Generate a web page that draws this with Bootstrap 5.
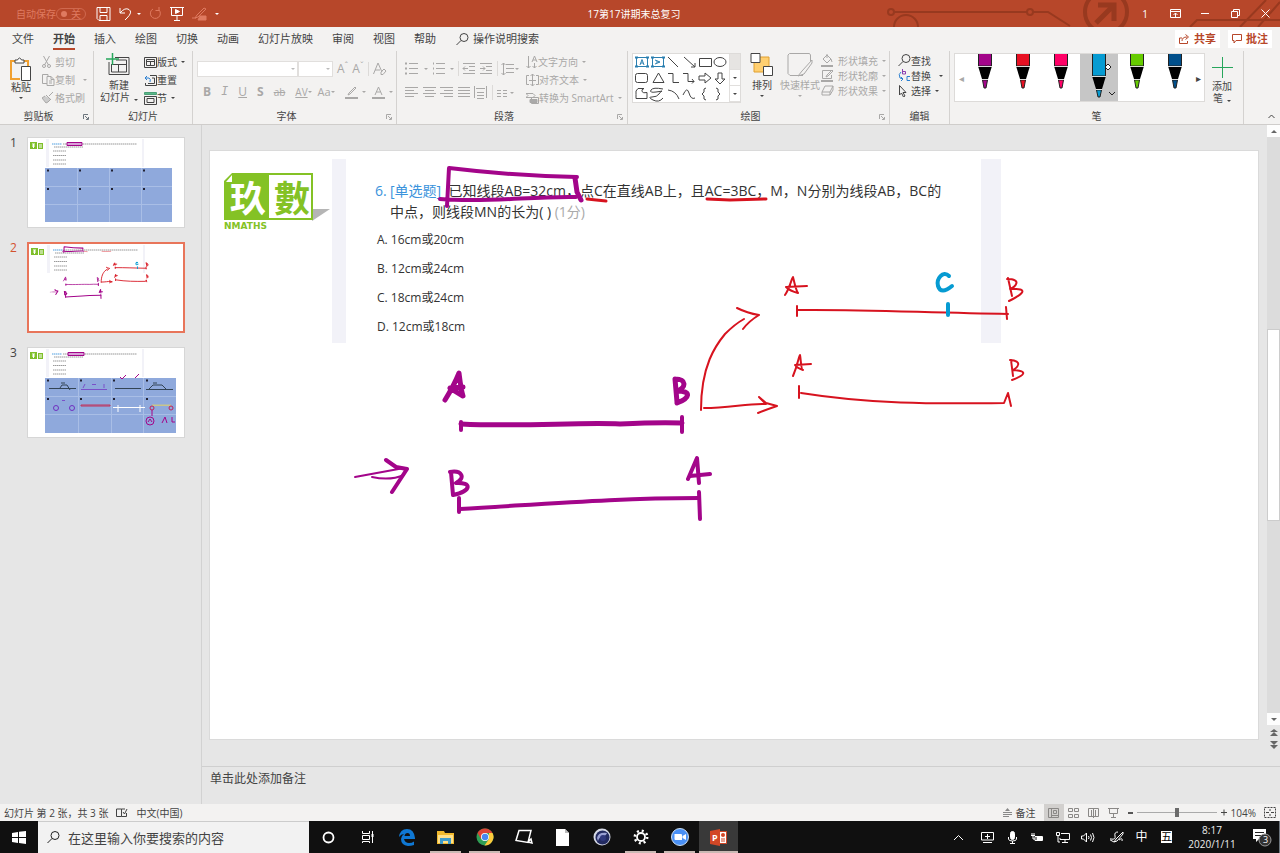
<!DOCTYPE html>
<html lang="zh-CN">
<head>
<meta charset="utf-8">
<meta name="viewport" content="width=device-width, initial-scale=1">
<title>17第17讲期末总复习</title>
<link href="https://cdn.jsdelivr.net/npm/bootstrap@5.3.0/dist/css/bootstrap.min.css" rel="stylesheet">
<style>
:root{--brand:#b7472a;--panel:#f3f2f1;--ink:#444;--off:#a9a8a7;--line:#d4d2d0}
body{font-family:"Open Sans","Noto Sans CJK SC",sans-serif;font-size:10px;line-height:12px;color:var(--ink);background:#e6e6e6}
button{background:none;border:0;padding:0;color:inherit;font:inherit;line-height:inherit}
svg{display:block;flex:none}
.ic{fill:none;stroke:currentColor;stroke-width:1}
.off{color:var(--off)}
.caret{display:inline-block;flex:none;border:2px solid transparent;border-top-color:currentColor;border-bottom:0;width:0;height:0}
.titlebar{background:var(--brand);color:#fff;height:27px}
.titlebar .faint{color:#df7a60}
.titlebar .me-toggle{margin-right:10px}
.pill{border:1px solid #d0694f;border-radius:8px;height:12px;width:30px}
.pill input{appearance:none;width:6px;height:6px;border-radius:50%;background:#df7a60;margin:0}
.decor{right:0;top:0}
.winbtn{width:30px}
.tabs{height:24px;background:var(--panel);font-size:11px}
.tablist{gap:19px;padding-left:12px}
.tabs a{color:var(--ink);text-decoration:none;line-height:19px;border-bottom:2px solid transparent;white-space:nowrap}
.tabs a.on{font-weight:700;border-color:var(--brand)}
.tabs input{border:0;background:none;color:var(--ink);font-size:11px;width:90px;padding:0}
input::placeholder,textarea::placeholder{color:var(--ink);opacity:1}
.action{background:#fff;color:var(--brand);font-weight:700;height:18px;font-size:11px}
.ribbon{background:var(--panel);height:74px;border-bottom:1px solid #cfcdcb}
.rgroup{border-right:1px solid var(--line);padding-top:2px;position:relative}
.rbody{height:54px}
.rlabel{text-align:center;line-height:18px}
.launch{position:absolute;right:4px;bottom:4px;color:var(--off)}
.rows button{height:18px;white-space:nowrap}
.rows.tight button{height:15px}
.big{line-height:12px;white-space:nowrap;width:34px}
.big.wide{width:42px}
.w94{width:94px}.w99{width:99px}.w204{width:204px}.w231{width:231px}.w262{width:262px}.w60{width:60px}.w294{width:294px}
.combo{appearance:none;border:1px solid #e1dfdd;border-radius:0;height:16px;padding:0;background:#fff url("data:image/svg+xml,%3Csvg xmlns='http://www.w3.org/2000/svg' width='4' height='2'%3E%3Cpath d='M0 0h4L2 2z' fill='%23bbb'/%3E%3C/svg%3E") no-repeat right 2px center}
.fmt{font-size:12px;line-height:14px}
.fmtrow{gap:10px;padding-left:10px}
.fmtrow .close-set{gap:6px}
.vr1{width:1px;height:14px;background:#dcdad8}
.gallery{background:#fff;border:1px solid #dddbd9}
.gscroll{width:12px}
.gscroll button{height:16px;border-left:1px solid #e1dfdd;border-bottom:1px solid #e1dfdd}
.pen{width:38px;height:47px}
.pen.on{background:#c6c6c6}
.arr{width:9px}
.thumbs{width:202px;border-right:1px solid #d2d2d2;padding:12px 16px 0 10px}
.thumb{height:91px;margin-bottom:14px}
.thumb .num{width:17px;font-size:12px;line-height:12px}
.thumb .frame{width:158px;border:1px solid #d6d6d6;background:#fff}
.thumb.on .num{color:#d35230}
.thumb.on .frame{border:2px solid #e8755a}
.inkr{stroke-width:var(--fine,2)}
.inkp{stroke-width:var(--bold,4)}
.mini{--fine:6;--bold:7}
.stage{padding:26px 9px 0 8px}
.slide{background:#fff;aspect-ratio:1048/588;outline:1px solid #dadada;position:relative;color:#333}
.slide .strip{background:#f2f2f8;width:14px;height:184px}
.strip2{width:20px;height:184px;background:#f2f2f8}
.logo{margin:22px 0 0 14px;overflow:visible}
.quest{width:602px;font-size:14px;line-height:21px;margin:29px 0 0 29px}
.quest .no{width:15px;color:#3a93dc}
.quest .tag{color:#3a93dc}
.quest .score{color:#aaa}
.opts{font-size:12px;line-height:29px;margin:3px 0 0 2px}
.overlay{position:absolute;inset:0;width:100%;height:100%}
.sbar{width:13px;height:600px;background:#dcdcdc}
.sbar button{height:12px;background:#fdfdfd;color:#666}
.sthumb{background:#fff;border:1px solid #ccc;height:192px;margin-top:192px}
.notes{height:38px;border-top:1px solid #cfcfcf}
.notes textarea{border:0;background:none;resize:none;font-size:12px;line-height:16px;padding:0;height:24px}
.status{background:var(--panel);height:17px}
.status .view{width:20px;height:17px;color:#8a8886}
.status .view.on{background:#d2d0ce}
.zoom{appearance:none;width:80px;height:10px;background:linear-gradient(#aaa,#aaa) center/100% 1px no-repeat}
.zoom::-webkit-slider-thumb{appearance:none;width:4px;height:9px;background:#6b6b6b;border-radius:0}
.taskbar{background:#101010;color:#fff;height:32px}
.taskbar .start{width:38px}
.taskbar .find{background:#f2f2f2;width:271px;color:#222;border-top:1px solid #ccc}
.taskbar .find input{border:0;background:none;font-size:13px;line-height:16px;padding:0}
.app{width:39px;height:32px;flex:none}
.app.run{background:linear-gradient(#c9b9b4,#c9b9b4) center bottom/31px 2px no-repeat}
.app.on{background:linear-gradient(#c9b9b4,#c9b9b4) center bottom/39px 2px no-repeat,#393939}
.tray{width:25px;height:32px}
.clock{width:66px;line-height:14px;font-size:10px;color:#eee}
.notice{width:34px}
</style>
</head>
<body class="d-flex flex-column min-vh-100">

<svg width="0" height="0" class="position-absolute" aria-hidden="true">
  <defs>
    <g id="inkmarks" fill="none" stroke-linecap="round" stroke-linejoin="round">
      <g stroke="#a3058a">
        <path class="inkp" d="M447 206L449 168C490 173 530 176 577 177M440 199C490 203 530 196 576 197"/>
        <path stroke-width="5" d="M575 178L577 192L581 200"/>
        <path stroke-width="5" d="M445 400C450 392 455 383 459 373C460 381 461 390 463 396L450 388L463 387M675 379L677 402M675 379C686 379 687 387 677 391C692 391 690 398 677 403"/>
        <path stroke-width="5" d="M461 424C520 427 580 422 620 424C640 423 660 422 682 423"/>
        <path class="inkp" d="M461 422V430M682 417V432M459 498V512M699 492L700 519M451 472L453 495M450 472C462 470 466 478 456 483C472 482 472 491 453 495M688 479L697 458L699 483M690 476L710 474"/>
        <path class="inkp" d="M460 509C560 503 620 498 699 498M386 460L396 467L407 469L392 492"/>
        <path stroke-width="2" d="M355 477L404 468M372 477Q390 481 404 475"/>
      </g>
      <g stroke="#d7131f">
        <path stroke-width="3" d="M587 199Q596 200 606 201M707 199L730 200L766 199"/>
        <path class="inkr" d="M701 410C701 365 716 345 725 334Q735 324 744 319M737 308Q747 313 759 315Q749 321 743 329M704 408C730 408 748 403 766 404L759 397L766 403L777 406Q768 409 758 413"/>
        <path class="inkr" d="M785 295C790 288 792 277 793 277C794 281 796 291 798 293Q790 291 786 287L807 286M1008 278L1012 296M1007 279C1023 279 1015 287 1010 289C1030 288 1023 294 1009 301"/>
        <path class="inkr" d="M797 310C860 309 930 313 1008 314M797 306V316M1006 307L1007 319"/>
        <path class="inkr" d="M793 376C798 364 799 355 800 355C801 360 801 370 803 370Q797 368 795 365L811 364M1011 360L1013 376M1010 360C1023 361 1018 367 1013 370C1030 371 1023 376 1012 380M799 386V398M801 393C870 404 930 404 1004 403L1008 393L1011 406"/>
      </g>
      <path stroke="#069bd2" class="inkp" d="M949 276C943 270 936 279 938 286Q941 295 952 286M948 304V315"/>
    </g>
    <g id="miniq">
      <path fill="#7fbf2a" d="M2 4h7v7H2zM10 5h5v6h-5z"/><path fill="none" stroke="#fff" d="M4 6h3M4 8h3M5.500 6v4M11 7h3M11 9h3"/>
      <path fill="#f2f2f8" d="M18 1h3v28h-3zM114 1h2v28h-2z"/>
      <g fill="none" stroke-dasharray="1.500 .5" stroke-width="1">
        <path stroke="#4f9fe0" d="M24 6h10"/><path stroke="#999" d="M35 6h74M26 9h29M25 13h13M25 17.500h13M25 22h13M25 26h13"/>
      </g>
    </g>
    <g id="lens" class="ic"><circle cx="8" cy="4.500" r="4"/><path d="M5 7.500L.5 12"/></g>
    <g id="pentip"><path fill="#000" d="M1 12h14l-4 13H5z"/><path stroke="#ddd" d="M1 12.500h14M5 25.500h6"/></g>
  </defs>
</svg>

<header class="titlebar d-flex align-items-center position-relative">
  <svg class="decor position-absolute" width="400" height="27" fill="none" stroke="#98391f" stroke-width="2"><circle cx="11" cy="12" r="3"/><path d="M14 12h133M153 12h15l22 14"/><circle cx="150" cy="12" r="3"/><path d="M14 27a12 12 0 0 1 24 0M310 27l7-7h83M360 27l26-27M378 27l22-25"/><circle cx="226" cy="12" r="21" stroke-width="4"/><path stroke-width="5" d="M216 23l17-17M218 5h16v16"/></svg>
  <div class="col d-flex align-items-center position-relative">
    <label for="auto" class="faint ms-3">自动保存</label>
    <span class="pill faint d-flex align-items-center justify-content-between px-1 me-toggle"><input type="checkbox" id="auto"><span>关</span></span>
    <button aria-label="保存"><svg class="ic" width="15" height="14"><path d="M1 .5h13v13H3l-2-2zM4 .5v5h7v-5M4 13.500v-5h7v5"/></svg></button>
    <button class="ms-2" aria-label="撤消"><svg class="ic" width="14" height="14" stroke-width="1.500"><path d="M1 1v5h5M1 6Q6 0 10 2.500T8 11l-2 2"/></svg></button><span class="caret ms-1"></span>
    <button class="faint ms-2" aria-label="重做"><svg class="ic" width="13" height="14" stroke-width="1.500"><path d="M4 2a5 5 0 1 0 6 1M10 0v3.500H6.500"/></svg></button>
    <button class="ms-2" aria-label="放映"><svg class="ic" width="14" height="14"><path d="M0 .5h14M1.500 1v7.500h11V1M7 9v4M4 13.500h6"/><path fill="currentColor" d="M5.500 2.500l4 2-4 2z"/></svg></button>
    <button class="faint ms-2" aria-label="墨迹"><svg class="ic" width="15" height="14"><path d="M12 1L5 8l-2 3 3-1 8-8zM0 11h4"/><path fill="currentColor" d="M8 9h6v4H6z"/></svg></button><span class="caret ms-2"></span>
  </div>
  <div class="position-relative pe-2 me-1">17第17讲期末总复习</div>
  <div class="col d-flex align-items-center justify-content-end position-relative">
    <span class="me-2 pe-1">1</span>
    <button class="winbtn d-flex justify-content-center" aria-label="功能区选项"><svg class="ic" width="11" height="9"><path d="M.5.500h10v8H.5zM0 2.500h11M5.500 8V4M3.500 6l2-2 2 2"/></svg></button>
    <button class="winbtn d-flex justify-content-center" aria-label="最小化"><svg class="ic" width="8" height="9"><path d="M0 4.500h8"/></svg></button>
    <button class="winbtn d-flex justify-content-center" aria-label="还原"><svg class="ic" width="9" height="9"><path d="M.5 2.500h6v6h-6zM2.500 2V.5h6v6H7"/></svg></button>
    <button class="winbtn d-flex justify-content-center" aria-label="关闭"><svg class="ic" width="9" height="9"><path d="M.5.500l8 8M8.500.500l-8 8"/></svg></button>
  </div>
</header>

<nav class="tabs d-flex align-items-center">
  <div class="tablist d-flex">
    <a href="#">文件</a><a href="#" class="on">开始</a><a href="#">插入</a><a href="#">绘图</a><a href="#">切换</a><a href="#">动画</a><a href="#">幻灯片放映</a><a href="#">审阅</a><a href="#">视图</a><a href="#">帮助</a>
  </div>
  <label for="tell" class="ms-3 ps-1 me-1"><svg width="13" height="13"><use href="#lens"/></svg></label>
  <input id="tell" placeholder="操作说明搜索">
  <div class="ms-auto d-flex gap-2 pe-2">
    <button class="action px-1 d-flex align-items-center gap-1"><svg class="ic" width="11" height="10"><path d="M3 4H.500v5.500h8V7M3 7q0-4 5-4M6.500.500l3 2.500-3 2.500"/></svg>共享</button>
    <button class="action px-1 d-flex align-items-center gap-1"><svg class="ic" width="10" height="10"><path d="M.5.500h9v6H4L2 9V6.500H.5z"/></svg>批注</button>
  </div>
</nav>

<section class="ribbon d-flex">
  <div class="rgroup w94">
    <div class="rbody d-flex">
      <button class="big wide d-flex flex-column align-items-center pt-1"><svg class="ic" width="24" height="24"><path stroke="#f0a030" stroke-width="2" d="M7 4H2v18h9M15 4h4v5"/><path d="M6 6V3h2.500q2-4 4 0H15v3z" fill="#fff"/><path d="M12.500 9.500h9v14h-9z" fill="#fff"/></svg>粘贴<span class="caret mt-1"></span></button>
      <div class="rows off d-flex flex-column align-items-start">
        <button class="d-flex align-items-center gap-1"><svg class="ic" width="9" height="12"><path d="M1.500 0l5 9M7.500 0l-5 9"/><circle cx="2" cy="10" r="1.500"/><circle cx="7" cy="10" r="1.500"/></svg>剪切</button>
        <button class="d-flex align-items-center"><svg class="ic" width="13" height="12"><path d="M5 9.500H.5v-9H6v2M5 2.500h4l3 3v6H5zM9 2.500v3h3M7 7h3M7 9h3"/></svg>复制<span class="caret ms-2"></span></button>
        <button class="d-flex align-items-center"><svg class="ic" width="13" height="12"><path d="M11 0l-4 4M4 3l5 5M3 4L0 6l4 5 2-1 3-3" fill="#ccc"/></svg>格式刷</button>
      </div>
    </div>
    <div class="rlabel pe-3">剪贴板</div><svg class="ic launch text-secondary" width="6" height="6"><path d="M.5 5V.500H5M2 2l3 3M5.500 3v2.500H3"/></svg>
  </div>

  <div class="rgroup w99">
    <div class="rbody d-flex">
      <button class="big wide d-flex flex-column align-items-center ms-1"><svg class="ic" width="26" height="26"><path d="M9 4.500h14v17H3V9M5.500 11v8h15V7H10M5 11.500h16M12.500 12v7"/><path stroke="#26a65b" stroke-width="1.500" d="M6.500 0v12M0 6h13"/></svg>新建<span>幻灯片<span class="caret ms-1"></span></span></button>
      <div class="rows d-flex flex-column align-items-start ps-1">
        <button class="d-flex align-items-center"><svg class="ic" width="13" height="11"><path d="M.5.500h12v10H.5zM2.500 2.500h8v6h-8zM3 4.500h7M6.500 5v4"/></svg>版式<span class="caret ms-1"></span></button>
        <button class="d-flex align-items-center"><svg class="ic" width="13" height="11"><path d="M6 .5h6.500v10h-11V8M8 3h2.500v5.500H4"/><path stroke="#2a7fd0" d="M3 1L1 3l2 2M1 3h4q2 1 1 4"/></svg>重置</button>
        <button class="d-flex align-items-center"><svg class="ic" width="13" height="13"><path fill="#5cb98a" stroke="#4c9f76" d="M.5.500h12v2H.5z"/><path d="M.5 4.500h12v8H.5zM3 6.500h7v4H3z"/></svg>节<span class="caret ms-1"></span></button>
      </div>
    </div>
    <div class="rlabel">幻灯片</div>
  </div>

  <div class="rgroup w204">
    <div class="rbody off d-flex flex-column justify-content-center">
      <div class="d-flex align-items-center ps-1 mb-2">
        <select class="combo" style="width:101px" aria-label="字体"></select><select class="combo" style="width:35px" aria-label="字号"></select>
        <button class="ms-1 fmt">A<sup>ˆ</sup></button><button class="ms-1 fmt">A<sup>ˇ</sup></button><span class="vr1 mx-1"></span>
        <button aria-label="清除格式"><svg class="ic" width="14" height="14"><path d="M.5 12L5 1l4 9M2 8h5M8 10l3-3 2 2-3 3.500H8z"/></svg></button>
      </div>
      <div class="fmt fmtrow d-flex align-items-center">
        <button><b>B</b></button><button class="fst-italic font-monospace">I</button><button class="text-decoration-underline">U</button><button><b>S</b></button><button style="font-size:10px"><s>ab</s></button>
        <span class="close-set d-flex align-items-center">
        <button class="d-flex align-items-center" aria-label="字符间距"><span class="text-decoration-underline" style="font-size:10px">AV</span><span class="caret"></span></button><button class="d-flex align-items-center" style="font-size:11px">Aa<span class="caret"></span></button>
        <button class="d-flex align-items-center gap-1 ms-1" aria-label="突出显示"><svg class="ic" width="13" height="13"><path d="M10 1L4 7l-1 2 2-1 6-6z"/><path stroke-width="2" d="M0 12h13"/></svg><span class="caret"></span></button>
        <button class="d-flex align-items-center gap-1" aria-label="字体颜色"><svg class="ic" width="13" height="13"><path d="M3 9l3.500-8L10 9M4.500 6h4"/><path stroke-width="2" d="M0 12h13"/></svg><span class="caret"></span></button>
        </span>
      </div>
    </div>
    <div class="rlabel pe-3">字体</div><svg class="ic launch" width="6" height="6"><path d="M.5 5V.500H5M2 2l3 3M5.500 3v2.500H3"/></svg>
  </div>

  <div class="rgroup w231">
    <div class="rbody off d-flex justify-content-start">
      <svg class="ic ms-2" width="121" height="54"><path d="M4 10.500h9M4 15.500h9M4 20.500h9M31 10.500h9M31 15.500h9M31 20.500h9M58 10.500h12M64 13.500h6M64 17.500h6M58 20.500h12M58 15.500h5M60 13.500l-2 2 2 2M75 10.500h12M81 13.500h6M81 17.500h6M75 20.500h12M75 15.500h5M78 13.500l2 2-2 2M101 11.500h8M101 15.500h8M101 19.500h8M98.500 10v12M96.500 12l2-2 2 2M96.500 20l2 2 2-2"/><path d="M0 34.500h13M0 37.500h9M0 40.500h13M0 43.500h9M18 34.500h13M20 37.500h9M18 40.500h13M20 43.500h9M35 34.500h13M39 37.500h9M35 40.500h13M39 43.500h9M53 34.500h12M53 37.500h12M53 40.500h12M53 43.500h12M69.500 33v12M81.500 33v12M72 39.500h7M72 42.500h7M72 45.500h7M71 35.500h9M92 37.500h4M92 40.500h4M92 43.500h4M98 37.500h4M98 40.500h4M98 43.500h4"/><path stroke-width="2" d="M0 10.500h2M0 15.500h2M0 20.500h2M28 10.500h1M28 15.500h1M28 20.500h1"/><path stroke="#dcdad8" d="M53.500 8v15M92.500 8v15M87.500 32v15"/><path fill="currentColor" stroke="none" d="M19 15h4l-2 2zM45 15h4l-2 2zM110 15h4l-2 2zM105 39h4l-2 2z"/></svg>
      <div class="rows d-flex flex-column align-items-start">
        <button class="d-flex align-items-center"><svg class="ic" width="12" height="13"><path d="M2.500 0v12M.5 10l2 2 2-2M8.500 7v5M6.500 10l2 2 2-2M6 6l2.500-6L11 6M7 4h3"/></svg>文字方向<span class="caret ms-1"></span></button>
        <button class="d-flex align-items-center"><svg class="ic" width="13" height="13"><path d="M3 1.500H.500v9H3M10 1.500h2.500v9H10M6.500 0v12M4.500 2l2-2 2 2M4.500 10l2 2 2-2M3 6.500h7"/></svg>对齐文本<span class="caret ms-1"></span></button>
        <button class="d-flex align-items-center"><svg class="ic" width="13" height="11"><path d="M0 .5h7l2 2-2 2H0l2-2zM5.500 4.500h7v6h-7z"/><path d="M4 6.500h7v3H4z" fill="#aaa"/></svg>转换为 SmartArt<span class="caret ms-1"></span></button>
      </div>
    </div>
    <div class="rlabel pe-3">段落</div><svg class="ic launch" width="6" height="6"><path d="M.5 5V.500H5M2 2l3 3M5.500 3v2.500H3"/></svg>
  </div>

  <div class="rgroup w262">
    <div class="rbody d-flex ps-1">
      <div class="gallery d-flex" style="height:50px;width:109px">
        <svg class="ic" width="96" height="48"><g stroke="#2a7fb0"><path d="M3.500 3.500h11v9h-11zM19.500 3.500h11v9h-11z"/><path d="M7 11l2-5.500 2 5.500M8 9h2M22 6l5 2-5 2M24 7v2"/><path stroke-width="2" d="M2 3.500h3M13 3.500h3M2 12.500h3M13 12.500h3M18 3.500h3M29 3.500h3M18 12.500h3M29 12.500h3"/></g><path d="M35 3l10 10M51 3l11 10M62 9v4h-4M66.500 4.500h12v8h-12zM93 8a6 4.500 0 1 1-12 0a6 4.500 0 1 1 12 0M20 28.500h11L25.500 19zM35 19.500h5v9h6M50 19.500h5v8h6M59 25l2 2.500-2 2M66 22h6v-3l6 5-6 5v-3h-6zM85 19h4v6h3l-5 5-5-5h3zM8 34.500H5q-3 2-2 6v4h11v-6q-4 1-5-1t2-3zM30 35q-10-2-12 1t5 2 6-1-3 3-7 3 1 3 10-2M35 36q8 1 11 9M50 41q4-9 6-2t6 5M73 34q-3 0-2 4l-2 2 2 2q-1 4 2 4M83 34q3 0 2 4l2 2-2 2q1 4-2 4"/><rect x="2.500" y="19.500" width="12" height="9" rx="2"/></svg>
        <div class="gscroll d-flex flex-column"><button class="off" style="background:#e6e4e2" aria-label="上"></button><button class="d-flex align-items-center justify-content-center" aria-label="下"><span class="caret"></span></button><button class="d-flex align-items-center justify-content-center" aria-label="更多"><span class="caret"></span></button></div>
      </div>
      <button class="big d-flex flex-column align-items-center ms-1"><svg class="ic" width="24" height="26"><path fill="#ffcf70" stroke="#e0a030" d="M4 4h15v15H4z"/><path fill="#fff" d="M1 .5h9v9H1zM13.500 13.500h9v9h-9z"/></svg>排列<span class="caret mt-1"></span></button>
      <button class="big wide off d-flex flex-column align-items-center"><svg class="ic" width="26" height="26"><path d="M16 22.500H3l-2-2V2L2.500.500h20l1 1.500v6M25 7L15 18l-4 5 6-2 8-11z"/></svg>快速样式<span class="caret mt-1"></span></button>
      <div class="rows tight off d-flex flex-column align-items-start">
        <button class="d-flex align-items-center"><svg class="ic me-1" width="13" height="13"><path d="M6 1L2 5l4 4 4-4zM6 0v4M10 5l1 3"/><path stroke-width="2" d="M0 12h12"/></svg>形状填充<span class="caret ms-1"></span></button>
        <button class="d-flex align-items-center"><svg class="ic me-1" width="13" height="13"><path d="M10 1.500H1.500v8h9V6M11 1L6 6l-1 2 2-1 5-5z"/><path stroke-width="2" d="M0 12h12"/></svg>形状轮廓<span class="caret ms-1"></span></button>
        <button class="d-flex align-items-center"><svg class="ic me-1" width="13" height="11"><path d="M4 1h8L9 7H1zM1 7v3h8l3-5V1M9 7v3"/></svg>形状效果<span class="caret ms-1"></span></button>
      </div>
    </div>
    <div class="rlabel pe-3">绘图</div><svg class="ic launch" width="6" height="6"><path d="M.5 5V.500H5M2 2l3 3M5.500 3v2.500H3"/></svg>
  </div>

  <div class="rgroup w60">
    <div class="rbody rows tight d-flex flex-column align-items-start ps-2">
      <button class="d-flex align-items-center"><svg width="13" height="13"><use href="#lens"/></svg>查找</button>
      <button class="d-flex align-items-center"><svg class="ic" width="13" height="13"><path stroke="#8a3fb0" d="M4.500 0v5h3V2.500h-3"/><path stroke="#2a7fd0" d="M3 3q-3 2-1 6l3 1M3 8l2 2-2 2M12 7.500H9v4h3"/></svg>替换<span class="caret ms-2"></span></button>
      <button class="d-flex align-items-center"><svg class="ic me-1" width="9" height="12"><path d="M1.500.500v9.500l2-2 2 4 1.500-1-2-3.500h3z"/></svg>选择<span class="caret ms-1"></span></button>
    </div>
    <div class="rlabel">编辑</div>
  </div>

  <div class="rgroup w294">
    <div class="rbody d-flex ps-1">
      <div class="gallery d-flex align-items-start justify-content-center" style="height:49px;width:251px">
        <button class="arr align-self-center off" aria-label="前">◂</button>
        <button class="pen d-flex justify-content-center" aria-label="紫色笔"><svg width="16" height="36"><path fill="#a3058a" stroke="#222" d="M1.500-1h13v13h-13zM5.500 26h5L9 34H7z"/><use href="#pentip"/></svg></button>
        <button class="pen d-flex justify-content-center" aria-label="红色笔"><svg width="16" height="36"><path fill="#e81123" stroke="#222" d="M1.500-1h13v13h-13zM5.500 26h5L9 34H7z"/><use href="#pentip"/></svg></button>
        <button class="pen d-flex justify-content-center" aria-label="粉色笔"><svg width="16" height="36"><path fill="#ff0066" stroke="#222" d="M1.500-1h13v13h-13zM5.500 26h5L9 34H7z"/><use href="#pentip"/></svg></button>
        <button class="pen on d-flex justify-content-center" aria-label="蓝色笔"><svg width="36" height="47"><path fill="#069bd2" stroke="#222" d="M11.500-1h13v23h-13zM15.500 36h5L19 43h-2z"/><use href="#pentip" x="10" y="10"/><path fill="none" stroke="#222" d="M28 38l3 3 3-3"/><path fill="#fff" stroke="#222" d="M27 10l-3 3 3 3 3-3z"/></svg></button>
        <button class="pen d-flex justify-content-center" aria-label="绿色笔"><svg width="16" height="36"><path fill="#66cc00" stroke="#222" d="M1.500-1h13v13h-13zM5.500 26h5L9 34H7z"/><use href="#pentip"/></svg></button>
        <button class="pen d-flex justify-content-center" aria-label="深蓝笔"><svg width="16" height="36"><path fill="#004f8b" stroke="#222" d="M1.500-1h13v13h-13zM5.500 26h5L9 34H7z"/><use href="#pentip"/></svg></button>
        <button class="arr align-self-center" aria-label="后">▸</button>
      </div>
      <button class="big d-flex flex-column align-items-center pt-1"><svg width="22" height="23"><path stroke="#26a65b" d="M11.500 0v21M1 10.500h21"/></svg>添加<span>笔<span class="caret ms-1"></span></span></button>
    </div>
    <div class="rlabel">笔</div>
  </div>
  <button class="ms-auto mt-auto me-1 mb-1" aria-label="折叠功能区"><svg class="ic" width="9" height="7"><path d="M1.500 5l3-3 3 3"/></svg></button>
</section>

<main class="d-flex flex-grow-1">
  <aside class="thumbs flex-shrink-0">
    <div class="thumb d-flex"><div class="num">1</div><div class="frame"><svg width="156" height="88"><use href="#miniq"/><path fill="#8fa9dc" d="M17 30h127v54H17z"/><path stroke="#a9bee6" d="M17 48.500h127M17 66.500h127M49.500 30v54M81.500 30v54M113.500 30v54"/><path stroke="#223" stroke-width="2" stroke-dasharray="2 30" d="M19 32.500h110M19 51h110"/><path fill="#d9a0d8" stroke="#a3058a" d="M39 4.500h15v3H39z"/></svg></div></div>
    <div class="thumb on d-flex"><div class="num">2</div><div class="frame"><svg width="154" height="87"><use href="#miniq"/><svg class="mini" viewBox="210 151 1048 588" width="154" height="87"><use href="#inkmarks"/></svg></svg></div></div>
    <div class="thumb d-flex"><div class="num">3</div><div class="frame"><svg width="156" height="88" fill="none"><use href="#miniq"/><path fill="#8fa9dc" d="M17 30h131v55H17z"/><path stroke="#a9bee6" d="M17 48.500h131M17 66.500h131M50.500 30v55M83.500 30v55M115.500 30v55"/><path stroke="#223" stroke-width="2" stroke-dasharray="2 31" d="M19 32.500h110M19 51h110"/><path fill="#d9a0d8" stroke="#a3058a" d="M40 4.500h16v3H40z"/><path stroke="#345" d="M21 40.500h27M32 40l2-3h5l3 5M33 35h4M87 40.500h26M118 41.500h27M121 41l4-4h9l4 4M125 35h4"/><path stroke="#7a50c8" d="M53 41.500h26M55 40l2-4M76 36v4M64 36.500h4M34 52.500h3"/><path stroke="#c0305a" d="M53 57h29v1H53z"/><path stroke="#fff" d="M85 59.500h32M90 57v7M112 57v7"/><path stroke="#c9c58a" d="M124 57h19v.5h-19z"/><path stroke="#a3058a" d="M92 29l2 2 4-4M107 30l4-4M134 75l3-6 2 6M144 69v5h3"/><circle cx="28" cy="60" r="2.500" stroke="#7030c0"/><circle cx="44" cy="60" r="2.500" stroke="#7030c0"/><circle cx="124" cy="60" r="2" stroke="#c0205a"/><circle cx="143" cy="60" r="2" stroke="#c0205a"/><circle cx="122" cy="73" r="4" stroke="#a3058a"/><path stroke="#a3058a" d="M120 74l2-3 2 3M124 62v6"/></svg></div></div>
  </aside>

  <section class="d-flex flex-column flex-grow-1">
    <div class="d-flex flex-grow-1">
      <div class="stage flex-grow-1">
        <div class="slide d-flex align-items-start">
          <svg class="logo" width="108" height="58"><path fill="#b5b5b5" d="M88 36h18L88 48z"/><path fill="#84c225" d="M8 0h81v47H0V8z"/><path fill="#fff" d="M45 2h42v43H45zM8 2v7H2z"/><g font-family="Noto Sans CJK TC,sans-serif" font-weight="700" font-size="36"><text x="6" y="39" fill="#fff">玖</text><text x="50" y="39" fill="#84c225">數</text></g><text x="0" y="56" font-family="DejaVu Sans,sans-serif" font-weight="700" font-size="9" fill="#84c225">NMATHS</text></svg>
          <div class="strip mt-2"></div>
          <div class="quest">
            <div class="d-flex"><span class="no">6.</span><div><span class="tag">[单选题]</span>&nbsp; 已知线段AB=32cm，点C在直线AB上，且AC=3BC，M，N分别为线段AB，BC的<br>中点，则线段MN的长为( ) <span class="score">(1分)</span></div></div>
            <div class="opts"><div>A. 16cm或20cm</div><div>B. 12cm或24cm</div><div>C. 18cm或24cm</div><div>D. 12cm或18cm</div></div>
          </div>
          <div class="strip2 mt-2 ms-1"></div>
          <svg class="overlay" viewBox="210 151 1048 588"><use href="#inkmarks"/></svg>
        </div>
      </div>
      <div class="d-flex flex-column flex-shrink-0">
        <div class="sbar d-flex flex-column">
          <button class="d-flex align-items-center justify-content-center" aria-label="向上滚动"><svg width="6" height="3"><path fill="currentColor" d="M0 3h6L3 0z"/></svg></button>
          <div class="sthumb"></div>
          <button class="mt-auto d-flex align-items-center justify-content-center" aria-label="向下滚动"><svg width="6" height="3"><path fill="currentColor" d="M0 0h6L3 3z"/></svg></button>
        </div>
        <svg class="mx-auto mt-1" width="8" height="22" fill="#666"><path d="M0 3h8L4 0zM0 7h8L4 3zM0 12h8l-4 4zM0 16h8l-4 4z"/></svg>
      </div>
    </div>
    <div class="notes d-flex align-items-start ps-2 pt-1"><textarea class="flex-grow-1" aria-label="备注" placeholder="单击此处添加备注"></textarea></div>
  </section>
</main>

<footer class="status d-flex align-items-center">
  <span class="px-1">幻灯片 第 2 张，共 3 张</span>
  <svg class="ic ms-1" width="12" height="9"><path d="M5.500 1v7.500H.500V1zM5.500 1H9M5.500 8.500h5V5M7 4l1.500 2L11 1"/></svg>
  <span class="ms-1 ps-1">中文(中国)</span>
  <div class="ms-auto d-flex align-items-center">
    <button class="d-flex align-items-center gap-1 me-2"><svg width="9" height="9" fill="#888"><path d="M2 3h5L4.500 0zM0 4h9v1H0zM0 6h9v1H0zM0 8h6v1H0z"/></svg>备注</button>
    <button class="view on d-flex align-items-center justify-content-center" aria-label="普通"><svg class="ic" width="11" height="10"><path d="M.5.500h10v9H.500zM3.500.500v9M5.500 2.500h3v3h-3zM4 7.500h6"/></svg></button>
    <button class="view d-flex align-items-center justify-content-center" aria-label="浏览"><svg class="ic" width="11" height="10"><path d="M.5.500h4v3h-4zM6.500.500h4v3h-4zM.500 6.500h4v3h-4zM6.500 6.500h4v3h-4z"/></svg></button>
    <button class="view d-flex align-items-center justify-content-center" aria-label="阅读"><svg class="ic" width="11" height="10"><path d="M.5.500h10v8H.500zM5.500 0v10M3.500 2v6M7.500 2v6"/></svg></button>
    <button class="view d-flex align-items-center justify-content-center" aria-label="放映"><svg class="ic" width="11" height="10"><path d="M0 .500h11M1.500 1v4.500h8V1M5.500 6v3M3 9.500h5"/></svg></button>
    <button class="ms-1 me-1" aria-label="缩小"><svg width="5" height="2" fill="#555"><path d="M0 0h5v2H0z"/></svg></button>
    <input type="range" class="zoom" min="0" max="100" value="50" aria-label="缩放">
    <button class="mx-1" aria-label="放大"><svg class="ic" width="6" height="7"><path d="M3 .500v6M0 3.500h6"/></svg></button>
    <span>104%</span>
    <button class="ms-2 me-1" aria-label="适应窗口"><svg class="ic" width="12" height="11"><path stroke-dasharray="2 1" d="M.5.500h11v10H.5z"/><path d="M6 2v2M6 7v2M2 5.500h3M7 5.500h3"/></svg></button>
  </div>
</footer>

<footer class="taskbar d-flex align-items-stretch">
  <button class="start d-flex align-items-center justify-content-center" aria-label="开始"><svg width="14" height="13" fill="#fff"><path d="M0 2l6-1v5H0zM7 .800L14 0v6H7zM0 7h6v5l-6-1zM7 7h7v6l-7-1z"/></svg></button>
  <div class="find d-flex align-items-center"><label for="seek" class="ms-2 me-2"><svg width="14" height="13"><use href="#lens" x="1"/></svg></label><input id="seek" class="flex-grow-1" placeholder="在这里输入你要搜索的内容"></div>
  <div class="d-flex">
    <button class="app d-flex align-items-center justify-content-center" aria-label="Cortana"><svg width="13" height="13"><circle cx="6.500" cy="6.500" r="5" fill="none" stroke="#fff" stroke-width="1.800"/></svg></button>
    <button class="app d-flex align-items-center justify-content-center" aria-label="任务视图"><svg class="ic" width="14" height="12"><path d="M1.500 0v2.500h7V0M1.500 4.500h7v4h-7zM1.500 12v-1.500h7V12M11.500 0v12"/><path stroke-width="2" d="M11.500 3v3"/></svg></button>
    <button class="app d-flex align-items-center justify-content-center" aria-label="Edge"><svg width="16" height="17"><path fill="#0f78d4" d="M0 8Q1 0 8 0t8 9v1H5q1 4 5 4 3 0 5-1.500V16q-3 1-6 1-7-1-7-7 0-3 3-5-3 0-5 3M5.500 7H11q0-3-2.500-3T5.500 7"/></svg></button>
    <button class="app run d-flex align-items-center justify-content-center" aria-label="文件资源管理器"><svg width="18" height="15"><path fill="#f0b92e" d="M0 1h7l1 2h9v11H0z"/><path fill="#ffe08a" d="M1 5h15v8H1z"/><path fill="#3e9ccc" d="M3 8h11v6h-3v-3H6v3H3z"/></svg></button>
    <button class="app run d-flex align-items-center justify-content-center" aria-label="Chrome"><svg width="18" height="18"><circle cx="9" cy="9" r="8.500" fill="#2f9e55"/><path fill="#dc4437" d="M1.500 5A8.500 8.500 0 0 1 16.500 5H9L5 11z"/><path fill="#fdca3c" d="M16.500 5A8.500 8.500 0 0 1 8.500 17.500L13 11V5z"/><circle cx="9" cy="9" r="4" fill="#fff"/><circle cx="9" cy="9" r="3.200" fill="#4687f0"/></svg></button>
    <button class="app d-flex align-items-center justify-content-center" aria-label="画板"><svg width="19" height="16" fill="none" stroke="#fff" stroke-width="1.500"><path d="M5 1.500h12l-3 12-12-2zM14 13l3-3 1 4z"/></svg></button>
    <button class="app d-flex align-items-center justify-content-center" aria-label="文档"><svg width="13" height="17"><path fill="#fff" d="M0 0h9l4 4v13H0z"/><path fill="#bbb" d="M9 0v4h4z"/></svg></button>
    <button class="app d-flex align-items-center justify-content-center" aria-label="Cinema 4D"><svg width="18" height="18"><circle cx="9" cy="9" r="8.500" fill="#d5d9e6"/><circle cx="9.500" cy="9.500" r="7" fill="#222a60"/><path fill="#9aa1d4" d="M4 10q1-6 10-5-1 3-4 3-4 1-5 5z"/><circle cx="10" cy="10" r="3" fill="#30387c"/></svg></button>
    <button class="app run d-flex align-items-center justify-content-center" aria-label="设置"><svg width="16" height="16" fill="none" stroke="#fff"><circle cx="8" cy="8" r="4" stroke-width="1.800"/><circle cx="8" cy="8" r="6.200" stroke-width="2.500" stroke-dasharray="2 2.870"/></svg></button>
    <button class="app run d-flex align-items-center justify-content-center" aria-label="Zoom"><svg width="18" height="18"><circle cx="9" cy="9" r="8.500" fill="#4a90f5" stroke="#cde"/><path fill="#fff" d="M3.500 6H10q1 0 1 1v5H4.500q-1 0-1-1zM11.500 8L15 6v6l-3.500-2z"/></svg></button>
    <button class="app on d-flex align-items-center justify-content-center" aria-label="PowerPoint"><svg width="18" height="17"><path fill="#fff" stroke="#d24726" d="M8 2.500h8.500v12H8z"/><path fill="#d24726" d="M0 2l10-2v17L0 15zM11 9.500h4v1h-4zM11 11.500h4v1h-4z"/><circle cx="13" cy="6" r="2" fill="#d24726"/><text x="2" y="12" font-size="9" font-weight="700" fill="#fff">P</text></svg></button>
  </div>
  <div class="d-flex align-items-center ms-auto">
    <button class="tray d-flex align-items-center justify-content-center me-1" aria-label="更多图标"><svg class="ic" width="11" height="7"><path d="M1 6l4.500-4.500L10 6"/></svg></button>
    <button class="tray d-flex align-items-center justify-content-center" aria-label="显示"><svg class="ic" width="13" height="11"><path d="M.5.500h12v7.500H.500zM2 10.500h9M6.500 2v5M4 4.500h5"/></svg></button>
    <button class="tray d-flex align-items-center justify-content-center" aria-label="麦克风"><svg class="ic" width="9" height="13"><rect x="2.500" y=".5" width="4" height="8" rx="2" fill="#fff"/><path d="M.5 6v2q0 2 4 2t4-2V6M4.500 10v2.500M2 12.500h5"/></svg></button>
    <button class="tray d-flex align-items-center justify-content-center" aria-label="电池"><svg class="ic" width="13" height="9"><path d="M4 3.500h7.500v4H4zM1 0v2M3 0v2M0 2.500h4M2 3v3h2"/><path fill="#fff" d="M6 4h5v3H6z"/></svg></button>
    <button class="tray d-flex align-items-center justify-content-center" aria-label="网络"><svg class="ic" width="14" height="11"><path d="M5 1.500h8.500v6H4V6M9 8v2M6 10.500h6M.5.500h3v3h-3zM2 4v6h2"/></svg></button>
    <button class="tray d-flex align-items-center justify-content-center me-1" aria-label="音量"><svg class="ic" width="14" height="11"><path d="M.5 4v3h2L5.500 10V1L2.500 4zM7.500 4q1 1.500 0 3M9.500 2.500q2 3 0 6M11.500 1q3 4.500 0 9"/></svg></button>
    <button class="tray d-flex align-items-center justify-content-center" aria-label="墨迹工作区"><svg class="ic" width="14" height="12"><path d="M13 1L6 8l-2 3 3-1 6-7zM8 1Q4 1 5 5T1 8t3 3M9 9q4-3 3 1"/></svg></button>
    <button class="tray" style="font-size:12px">中</button>
    <button class="tray d-flex align-items-center justify-content-center"><span class="bg-white text-black" style="font-size:11px">五</span></button>
    <button class="clock">8:17<br>2020/1/11</button>
    <button class="notice d-flex align-items-center justify-content-center" aria-label="通知"><svg width="20" height="20"><path fill="#fff" d="M1 2h13v10H7l-3 3v-3H1z"/><path stroke="#222" d="M3 5.500h9M3 8.500h7"/><circle cx="13" cy="13" r="6" fill="#333" stroke="#999"/><text x="11" y="16" font-size="9" fill="#fff">3</text></svg></button>
    <span class="vr1 h-100 bg-secondary"></span>
  </div>
</footer>
<script src="https://cdn.jsdelivr.net/npm/bootstrap@5.3.0/dist/js/bootstrap.bundle.min.js"></script>
</body>
</html>
